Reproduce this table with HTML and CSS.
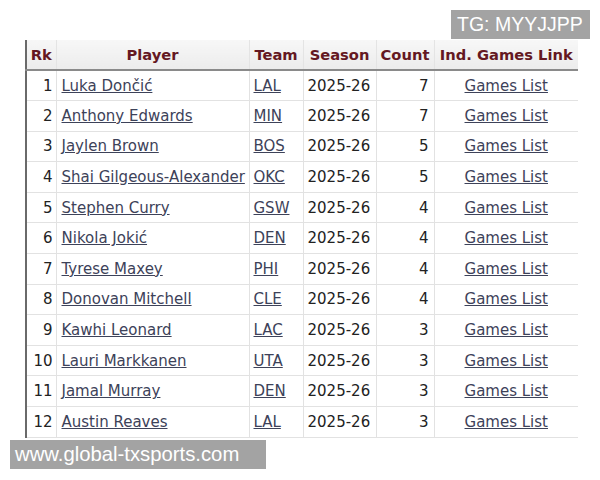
FILE: index.html
```html
<!DOCTYPE html>
<html>
<head>
<meta charset="utf-8">
<link rel="stylesheet" href="styles.css">
</head>
<body>
<div class="page">
  <table class="stats">
    <thead>
      <tr>
        <th class="rk">Rk</th>
        <th class="player">Player</th>
        <th class="team">Team</th>
        <th class="season">Season</th>
        <th class="count">Count</th>
        <th class="link">Ind. Games Link</th>
      </tr>
    </thead>
    <tbody>
      <tr><td class="rk">1</td><td class="player"><a>Luka Dončić</a></td><td class="team"><a>LAL</a></td><td class="season">2025-26</td><td class="count">7</td><td class="link"><a>Games List</a></td></tr>
      <tr><td class="rk">2</td><td class="player"><a>Anthony Edwards</a></td><td class="team"><a>MIN</a></td><td class="season">2025-26</td><td class="count">7</td><td class="link"><a>Games List</a></td></tr>
      <tr><td class="rk">3</td><td class="player"><a>Jaylen Brown</a></td><td class="team"><a>BOS</a></td><td class="season">2025-26</td><td class="count">5</td><td class="link"><a>Games List</a></td></tr>
      <tr><td class="rk">4</td><td class="player"><a>Shai Gilgeous-Alexander</a></td><td class="team"><a>OKC</a></td><td class="season">2025-26</td><td class="count">5</td><td class="link"><a>Games List</a></td></tr>
      <tr><td class="rk">5</td><td class="player"><a>Stephen Curry</a></td><td class="team"><a>GSW</a></td><td class="season">2025-26</td><td class="count">4</td><td class="link"><a>Games List</a></td></tr>
      <tr><td class="rk">6</td><td class="player"><a>Nikola Jokić</a></td><td class="team"><a>DEN</a></td><td class="season">2025-26</td><td class="count">4</td><td class="link"><a>Games List</a></td></tr>
      <tr><td class="rk">7</td><td class="player"><a>Tyrese Maxey</a></td><td class="team"><a>PHI</a></td><td class="season">2025-26</td><td class="count">4</td><td class="link"><a>Games List</a></td></tr>
      <tr><td class="rk">8</td><td class="player"><a>Donovan Mitchell</a></td><td class="team"><a>CLE</a></td><td class="season">2025-26</td><td class="count">4</td><td class="link"><a>Games List</a></td></tr>
      <tr><td class="rk">9</td><td class="player"><a>Kawhi Leonard</a></td><td class="team"><a>LAC</a></td><td class="season">2025-26</td><td class="count">3</td><td class="link"><a>Games List</a></td></tr>
      <tr><td class="rk">10</td><td class="player"><a>Lauri Markkanen</a></td><td class="team"><a>UTA</a></td><td class="season">2025-26</td><td class="count">3</td><td class="link"><a>Games List</a></td></tr>
      <tr><td class="rk">11</td><td class="player"><a>Jamal Murray</a></td><td class="team"><a>DEN</a></td><td class="season">2025-26</td><td class="count">3</td><td class="link"><a>Games List</a></td></tr>
      <tr><td class="rk">12</td><td class="player"><a>Austin Reaves</a></td><td class="team"><a>LAL</a></td><td class="season">2025-26</td><td class="count">3</td><td class="link"><a>Games List</a></td></tr>
    </tbody>
  </table>
  <div class="mark mark-top">TG: MYYJJPP</div>
  <div class="mark mark-bottom">www.global-txsports.com</div>
</div>
</body>
</html>
```

FILE: styles.css
```css
html, body {
  margin: 0;
  padding: 0;
  background: #ffffff;
}

.page {
  position: relative;
  width: 600px;
  height: 480px;
  padding: 40px 0 0 25px;
  box-sizing: border-box;
  font-family: "DejaVu Sans", Verdana, sans-serif;
}

.stats {
  border-collapse: collapse;
  width: 552px;
  table-layout: fixed;
  font-size: 15px;
  color: #222;
  border-left: 2px solid #6a6a6a;
}

.stats th,
.stats td {
  box-sizing: border-box;
}

.stats th {
  height: 30px;
  padding: 0;
  font-size: 14.7px;
  font-weight: bold;
  color: #641822;
  background: linear-gradient(#f7f7f7, #ececec);
  border-bottom: 2px solid #8a8a8a;
  border-right: 1px solid #e4e4e4;
  text-align: center;
  white-space: nowrap;
}

.stats td {
  height: 30.6px;
  padding: 0 4px;
  border-bottom: 1px solid #e2e2e2;
  border-right: 1px solid #e2e2e2;
  white-space: nowrap;
  overflow: hidden;
}

.stats th.link, .stats td.link { border-right: none; }

.stats .rk { width: 30px; }
.stats .player { width: 193px; }
.stats .team { width: 54px; }
.stats .season { width: 73px; }
.stats .count { width: 58px; }
.stats .link { width: 144px; }

.stats td.rk { text-align: right; padding-right: 3px; }
.stats td.player { text-align: left; padding-left: 5px; }
.stats td.team { text-align: left; padding-left: 4px; }
.stats td.season { text-align: left; padding-left: 4px; }
.stats td.count { text-align: right; padding-right: 5px; }
.stats td.link { text-align: center; }

.stats a {
  color: #3d4259;
  text-decoration: underline;
}

.mark {
  position: absolute;
  background: #a3a3a3;
  color: #ffffff;
  font-family: "Liberation Sans", Arial, sans-serif;
  line-height: 29px;
  height: 29px;
  padding: 0 6px;
  box-sizing: border-box;
  white-space: nowrap;
}

.mark-top {
  left: 451px;
  top: 10px;
  width: 139px;
  font-size: 19.5px;
}

.mark-bottom {
  left: 10px;
  top: 440px;
  width: 256px;
  font-size: 20.3px;
  padding-left: 5px;
}
```
